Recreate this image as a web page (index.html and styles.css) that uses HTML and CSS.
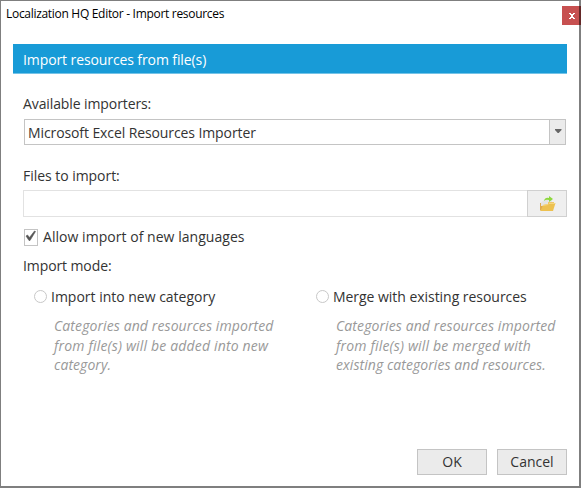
FILE: index.html
```html
<!DOCTYPE html>
<html lang="en">
<head>
<meta charset="utf-8">
<title>Localization HQ Editor</title>
<link rel="stylesheet" href="styles.css">
</head>
<body>
<div class="window">
  <header class="titlebar">
    <span class="title">Localization HQ Editor - Import resources</span>
    <button class="close" aria-label="Close"><svg width="6" height="6" viewBox="0 0 6 6" shape-rendering="crispEdges"><path d="M0 0h2v1h2V0h2v1H5v1H4v2h1v1h1v1H4V5H2v1H0V5h1V4h1V2H1V1H0z" fill="#fff"/></svg></button>
  </header>
  <h1 class="banner"><span class="t-banner">Import resources from file(s)</span></h1>
  <main class="form">
    <div class="label"><span class="t-available">Available importers:</span></div>
    <div class="select">
      <span class="value">Microsoft Excel Resources Importer</span>
      <span class="arrow"><svg width="8" height="6" viewBox="0 0 8 6"><path d="M1 0h6.500v1L4.700 4h-1L1 1z" fill="#666"/></svg></span>
    </div>
    <div class="label files-label"><span class="t-files">Files to import:</span></div>
    <div class="file-row">
      <input class="file-input" aria-label="Files to import">
      <button class="browse" aria-label="Browse">
        <svg width="17" height="16" viewBox="0 0 17 16"><path d="M1 7l6-4 6 1v7L2 14z" fill="#e4e5e3"/><path d="M1 7v7l1 1 3-5H2V7z" fill="#dfaa50"/><path d="M9 6h6v3H9z" fill="#efc66b"/><path d="M4 9l5-1 1-1h6.500l-2.500 8H1.500z" fill="#edc150"/><path d="M4 9.500l5-1 1-1h6" fill="none" stroke="#f6d780"/><path d="M5 5q1-4 5-3V0l4 3-4 3V4Q7 3 5 5z" fill="#8ed83e"/></svg>
      </button>
    </div>
    <div class="check-row">
      <span class="checkbox"><svg width="12" height="13" viewBox="0 0 12 13"><path d="M1 6l1.500-1 2 2.500L9.500 1l1 .500L5 10.500H4z" fill="#555" stroke="#555" stroke-width=".6"/></svg></span>
      <span class="t-allow">Allow import of new languages</span>
    </div>
    <div class="label mode-label"><span class="t-mode">Import mode:</span></div>
    <div class="modes">
      <section class="mode">
        <div class="option"><span class="radio"></span><span class="t-into">Import into new category</span></div>
        <p class="description"><span class="t-d1">Categories and resources imported</span><br><span class="t-d2">from file(s) will be added into new</span><br><span class="t-d3">category.</span></p>
      </section>
      <section class="mode">
        <div class="option"><span class="radio"></span><span class="t-merge">Merge with existing resources</span></div>
        <p class="description"><span class="t-d1">Categories and resources imported</span><br><span class="t-d2">from file(s) will be merged with</span><br><span class="t-d3">existing categories and resources.</span></p>
      </section>
    </div>
  </main>
  <footer class="actions">
    <button class="button">OK</button>
    <button class="button">Cancel</button>
  </footer>
</div>
</body>
</html>
```
FILE: styles.css
```css
* { box-sizing: border-box; }
body { margin: 0; font: 14px/20px "Open Sans", "Noto Sans", sans-serif; color: #333; background: #fff; }
button { font: inherit; color: inherit; padding: 0; border-radius: 0; }
svg { display: block; }
.window { width: 581px; height: 488px; display: flex; flex-direction: column; background: #fff; border: solid #7f7f7f; border-width: 1px 2px 2px 1px; }
.titlebar { height: 43px; flex: none; display: flex; justify-content: space-between; align-items: flex-start; padding: 5px 0 0 5px; color: #000; }
.title { font-size: 12px; line-height: 16px; letter-spacing: -.3px; white-space: nowrap; }
.close { width: 19px; height: 19px; margin-right: -2px; display: grid; place-items: center; border: 0; background: linear-gradient(90deg, #c75050 17px, #642828 17px); }
.banner, .form, .actions { letter-spacing: -.1px; }
.banner { height: 30px; flex: none; margin: 0 12px 0 12px; padding: 6px 10px 0; font: inherit; color: #fff; background: #189bd7; border-bottom: 1px solid #74c3e7; white-space: nowrap; }
.form { padding: 20px 12px 0 22px; flex: 1; white-space: nowrap; }
.label { height: 20px; }
.select { height: 26px; width: 542px; margin: 5px 0 0 1px; display: flex; justify-content: space-between; border: 1px solid #c4c4c4; }
.value { padding: 3px 0 0 3px; letter-spacing: -.1px; }
.arrow { width: 16px; display: grid; place-items: center; background: #ebebeb; border-left: 1px solid #c4c4c4; }
.files-label { margin-top: 21px; }
.t-files { letter-spacing: -.04px; }
.file-row { display: flex; width: 544px; height: 27px; margin-top: 4px; }
.file-input { flex: 1; min-width: 0; border: 1px solid #e2e2e2; border-right: 0; padding: 0 4px; font: inherit; }
.browse { width: 40px; display: grid; place-items: center; background: #efefef; border: 1px solid #d0d0d0; }
.check-row { display: flex; align-items: center; height: 20px; margin-top: 10px; gap: 5px; }
.checkbox { width: 14px; height: 17px; margin-left: 1px; border: 1px solid #c4c4c4; display: grid; place-items: start center; }
.t-allow { letter-spacing: .04px; }
.mode-label { margin-top: 9px; }
.modes { display: grid; grid-template-columns: 282px 1fr; margin: 11px 0 0 11px; }
.option { display: flex; align-items: center; gap: 4px; height: 20px; }
.radio { width: 13px; height: 13px; border: 1px solid #c8c8c8; border-radius: 50%; flex: none; position: relative; top: -1px; }
.t-into { letter-spacing: -.01px; }
.t-merge { letter-spacing: -.04px; }
.description { margin: 9px 0 0 20px; font-style: italic; line-height: 19.600px; color: #999; }
.t-d1 { letter-spacing: .1px; }
.t-d2 { letter-spacing: .17px; }
.t-d3 { letter-spacing: .06px; }
.actions { height: 47px; display: flex; justify-content: flex-end; align-items: flex-start; gap: 10px; padding: 10px 12px 0 0; }
.button { width: 70px; height: 26px; background: #ebebeb; border: 1px solid #c4c4c4; }
```
